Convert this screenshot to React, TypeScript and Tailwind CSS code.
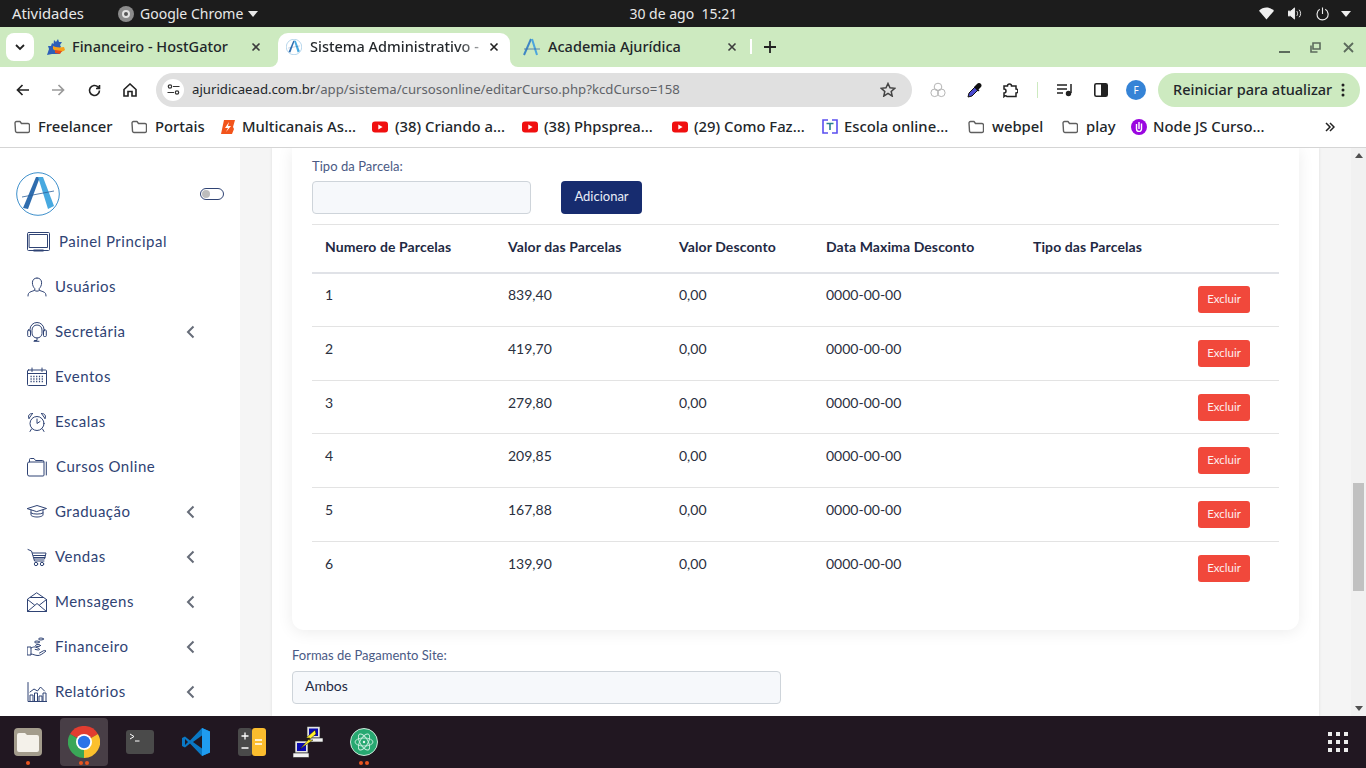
import React from "react";

const ui = { fontFamily: '"Noto Sans", "Open Sans", sans-serif' };
const pg = { fontFamily: 'Lato, "Open Sans", sans-serif' };

const S = ({ w = 20, h = 20, vb = "0 0 20 20", c = "#2f4374", sw = 1, children }: any) => (
  <svg width={w} height={h} viewBox={vb} fill="none" stroke={c} strokeWidth={sw} strokeLinecap="round" strokeLinejoin="round" className="shrink-0">
    {children}
  </svg>
);

const Folder = () => (
  <S w={16} h={14} vb="0 0 16 14" c="#5f5f5f" sw={1.4}>
    <path d="M1 3a1.500 1.500 0 0 1 1.500-1.500h3.500l1.500 2h6.500a1.500 1.500 0 0 1 1.500 1.500v6a1.500 1.500 0 0 1-1.500 1.500h-11a1.500 1.500 0 0 1-1.500-1.500z" />
  </S>
);
const Yt = () => (
  <svg width="16" height="12" viewBox="0 0 16 12" className="shrink-0">
    <rect width="16" height="11" y="0.500" rx="3" fill="#f00f0f" />
    <path d="M6.300 3.500v5l4.300-2.500z" fill="#fff" />
  </svg>
);
const ALogo = ({ s = 17, ring = true }: { s?: number; ring?: boolean }) => (
  <svg width={s} height={s} viewBox="0 0 44 44" fill="none" className="shrink-0">
    {ring && <circle cx="22" cy="22" r="21.300" stroke="#3d8fcb" strokeWidth="1" />}
    <path d="M7 36 L20 5 L24 5 L12 37 Z" fill="#2e6cae" />
    <path d="M22 5 L27 5 L38 34 L32 37 Z" fill="#47a9e0" />
    <path d="M6 25 L38 19" stroke="#2c5f99" strokeWidth="0.800" />
  </svg>
);

const Chev = () => (
  <svg width="9" height="14" viewBox="0 0 9 14" fill="none" stroke="#666c78" strokeWidth="2" className="shrink-0">
    <path d="M7.500 1.500 2 7l5.500 5.500" />
  </svg>
);

const icons: Record<string, React.ReactNode> = {
  monitor: (
    <S w={23} h={20} vb="0 0 23 20">
      <rect x="0.500" y="0.500" width="22" height="18" rx="1" />
      <rect x="2.500" y="2.500" width="18" height="13" />
      <path d="M7 18.500h9" strokeWidth="1.800" />
    </S>
  ),
  user: (
    <S>
      <path d="M10 1c-3 0-4.600 2-4.600 4.800 0 2.400 1.200 4.800 2.400 5.800v1.700c-2.400 1-5.500 1.500-6.300 3.200-.4.800-.5 2-.5 2.500M10 1c3 0 4.600 2 4.600 4.800 0 2.400-1.200 4.800-2.400 5.800v1.700c2.400 1 5.500 1.500 6.300 3.200.4.800.5 2 .5 2.500M7.800 13.500c.6 1 3.800 1 4.400 0" />
    </S>
  ),
  headset: (
    <S>
      <path d="M3 9V7.500a7 7 0 0 1 14 0V9" />
      <path d="M5 8c0-3 2.200-5 5-5s5 2 5 5v3.500c0 2.300-2.200 4.500-5 4.500s-5-2.200-5-4.500z" />
      <rect x="0.700" y="8" width="2.800" height="6.500" rx="0.800" />
      <rect x="16.500" y="8" width="2.800" height="6.500" rx="0.800" />
      <path d="M10 16v2.500h-2.500M7 19.300h5" />
    </S>
  ),
  calendar: (
    <S>
      <rect x="0.500" y="3" width="19" height="15.500" rx="1" />
      <path d="M0.500 6.500h19M5 1v3.500M15 1v3.500" />
      <path d="M3.500 9.500h13M3.500 12h13M3.500 14.500h13" strokeDasharray="1.200 1.600" strokeWidth="1.300" strokeLinecap="butt" />
    </S>
  ),
  clock: (
    <S>
      <circle cx="10" cy="11.500" r="7" />
      <path d="M10 7v4.500l3-2M2 6.500C.5 4.500 2 1 5.500 1.500M18 6.500c1.500-2 0-5.500-3.500-5M4.500 17l-1.500 2.500M15.500 17l1.500 2.500M2 6.500l3.500-5M18 6.500l-3.500-5" />
    </S>
  ),
  folder: (
    <S>
      <path d="M.5 6.500a1.500 1.500 0 0 1 1.500-1.500h.5V2.500a1 1 0 0 1 1-1H7l1.500 2h7a1.500 1.500 0 0 1 1.500 1.500V18a1 1 0 0 1-1 1H2a1.500 1.500 0 0 1-1.500-1.500zM2.500 5h14M19.300 5v13" />
    </S>
  ),
  cap: (
    <S>
      <path d="M.5 6.500 10 3.500l9.500 3-9.500 3zM4 8v5c0 1 3 2 6 2s6-1 6-2V8M4 11c2 1.500 10 1.500 12 0" />
    </S>
  ),
  cart: (
    <S>
      <path d="M1 2.500l3.500 1.500 3 10h9.500M5.500 6h13.500l-1.500 6H7.500M6.500 8.500h12M7 10.500h11" />
      <circle cx="9" cy="17" r="1.700" />
      <circle cx="15" cy="17" r="1.700" />
    </S>
  ),
  mail: (
    <S>
      <path d="M.5 7.500v12h19v-12L10 1zM.5 7.500 7.500 13M19.500 7.500 12.500 13M.5 19.500l9.500-8 9.500 8M3.500 5.500h13" />
    </S>
  ),
  hand: (
    <S>
      <path d="M.5 10h3.500v8h-3.500zM4 11c2-1 3.500-1.500 5-.8l3 1.300c1 .5.5 1.800-.8 1.500l-3-.6M4 17c2 0 4 1.500 7 1.500 2 0 4-1.200 8-4.500-1-.8-2-.6-3 0l-3.500 2" />
      <ellipse cx="14" cy="2" rx="2.500" ry="1" />
      <ellipse cx="10" cy="5" rx="2.500" ry="1" />
      <ellipse cx="11" cy="8.500" rx="2.500" ry="1" />
    </S>
  ),
  chart: (
    <S>
      <path d="M1 .5v19h19" />
      <path d="M3 19v-6h3v6M7.500 19v-8h3v8M12 19v-5h3v5M16 19v-8h3v8M3 10l4-3 3.500 2 3-4 4 4" />
    </S>
  ),
};

const menu = [
  { i: "monitor", t: "Painel Principal", tx: "ml-[9px]" },
  { i: "user", t: "Usuários", tx: "ml-[8px]" },
  { i: "headset", t: "Secretária", ch: 1, tx: "ml-[8px]" },
  { i: "calendar", t: "Eventos", tx: "ml-[8px]" },
  { i: "clock", t: "Escalas", tx: "ml-[8px]" },
  { i: "folder", t: "Cursos Online", tx: "ml-[9px]" },
  { i: "cap", t: "Graduação", ch: 1, tx: "ml-[8px]" },
  { i: "cart", t: "Vendas", ch: 1, tx: "ml-[8px]" },
  { i: "mail", t: "Mensagens", ch: 1, tx: "ml-[8px]" },
  { i: "hand", t: "Financeiro", ch: 1, tx: "ml-[8px]" },
  { i: "chart", t: "Relatórios", ch: 1, tx: "ml-[8px]" },
];

const rows = [
  ["1", "839,40"],
  ["2", "419,70"],
  ["3", "279,80"],
  ["4", "209,85"],
  ["5", "167,88"],
  ["6", "139,90"],
];

const gridCols = "grid grid-cols-[183px_171px_147px_207px_165px_94px]";

const Close = ({ c = "#3c3c3c" }: { c?: string }) => (
  <svg width="10" height="10" viewBox="0 0 10 10" stroke={c} strokeWidth="1.600" className="shrink-0">
    <path d="M1.500 1.500l7 7M8.500 1.500l-7 7" />
  </svg>
);

const Bm = ({ w, gap, icon, t }: { w: string; gap: string; icon: React.ReactNode; t: string }) => (
  <div className={`flex items-center ${gap} ${w}`}>
    <span className="flex w-[16px] justify-center">{icon}</span>
    <span className="whitespace-nowrap text-[14.800px] font-medium text-[#22262a]">{t}</span>
  </div>
);

export default function App() {
  return (
    <div className="flex h-screen w-[1366px] flex-col overflow-hidden bg-white" style={ui}>
      {/* GNOME top bar */}
      <div className="flex h-[27px] shrink-0 items-center bg-[#1c1c1c] text-[14px] text-[#e8e8e8]">
        <span className="ml-[12px] w-[106px] text-[14.800px]">Atividades</span>
        <span className="flex h-[16px] w-[16px] items-center justify-center rounded-full bg-[#8b8b8b]">
          <span className="h-[8px] w-[8px] rounded-full border-2 border-[#e3e3e3] bg-[#555]" />
        </span>
        <span className="ml-[6px]">Google Chrome</span>
        <svg width="10" height="6" viewBox="0 0 10 6" className="ml-[5px]"><path d="M0 0h10L5 6z" fill="#e8e8e8" /></svg>
        <span className="ml-[365px] w-[120px] text-center">30 de ago&nbsp;&nbsp;15:21</span>
        <div className="ml-auto mr-[15px] flex items-center">
          <svg width="15" height="13" viewBox="0 0 16 13"><path d="M0 3.500C4.500-1 11.500-1 16 3.500L8 13z" fill="#f0f0f0" /></svg>
          <svg width="14" height="13" viewBox="0 0 15 13" fill="none" stroke="#eee" className="ml-[14px]"><path d="M0 4h3l4-3.500v12L3 9H0z" fill="#eee" /><path d="M9.500 4c1 1.500 1 3.500 0 5M12 2.500c2 2 2 6 0 8" /></svg>
          <svg width="13" height="14" viewBox="0 0 14 14" fill="none" stroke="#eee" strokeWidth="1.200" className="ml-[14px]"><path d="M4 2C.5 4 .5 9 2.500 11.500s6.500 2.500 9 0S13.500 4 10 2M7 0v7" /></svg>
          <svg width="10" height="6" viewBox="0 0 10 6" className="ml-[12px]"><path d="M0 0h10L5 6z" fill="#eee" /></svg>
        </div>
      </div>

      {/* Tab strip */}
      <div className="flex h-[40px] shrink-0 items-end bg-[#cdeac0] text-[14.500px] font-medium text-[#22262a]">
        <div className="mb-[6px] ml-[6px] flex h-[28px] w-[28px] items-center justify-center rounded-[8px] bg-white">
          <svg width="10" height="7" viewBox="0 0 10 7" fill="none" stroke="#222" strokeWidth="1.800"><path d="M1 1l4 4 4-4" /></svg>
        </div>
        <div className="mb-[6px] ml-[13px] flex h-[28px] w-[231px] items-center">
          <svg width="18" height="18" viewBox="0 0 18 18" className="shrink-0">
            <path d="M0 17 2 11 1 8l3 0 1-3 1.500 1L7 2l2 2 2-3 1 3 3 0-2 3 1 2-2 2 3 2-3 3H5z" fill="#2d5fb8" />
            <path d="M6 8c2 1 6 2 11 1l1 3c-3 3-9 2-12-1z" fill="#f7a11a" />
            <path d="M8 12l7 1-2 3-5-1z" fill="#e74c1c" />
          </svg>
          <span className="ml-[7px] w-[179px] whitespace-nowrap">Financeiro - HostGator</span>
          <Close />
        </div>
        <div className="relative flex h-[34px] w-[232px] items-center rounded-t-[10px] bg-white pb-[6px] pl-[8px]">
          <span className="absolute bottom-0 left-[-8px] h-[8px] w-[8px] bg-white">
            <span className="block h-[8px] w-[8px] rounded-br-[8px] bg-[#cdeac0]" />
          </span>
          <span className="absolute bottom-0 right-[-8px] h-[8px] w-[8px] bg-white">
            <span className="block h-[8px] w-[8px] rounded-bl-[8px] bg-[#cdeac0]" />
          </span>
          <ALogo s={16} />
          <span className="ml-[8px] w-[179px] whitespace-nowrap bg-gradient-to-r from-[#22262a] from-[82%] to-[#e4e4e4] bg-clip-text text-transparent">Sistema Administrativo -</span>
          <Close c="#222" />
        </div>
        <div className="mb-[6px] ml-[13px] flex h-[28px] w-[227px] items-center">
          <svg width="18" height="18" viewBox="0 0 18 18" fill="none" className="shrink-0">
            <path d="M1 17 8 1" stroke="#3f86c4" strokeWidth="2" />
            <path d="M9 1l5 16" stroke="#4ca6dc" strokeWidth="2" />
            <path d="M1 11h16" stroke="#3f6ea8" strokeWidth="0.800" />
          </svg>
          <span className="ml-[7px] w-[179px] whitespace-nowrap">Academia Ajurídica</span>
          <Close />
        </div>
        <span className="mb-[13px] h-[15px] w-[2px] bg-white" />
        <svg width="12" height="12" viewBox="0 0 12 12" stroke="#222" strokeWidth="1.800" className="mb-[14px] ml-[12px]"><path d="M6 0v12M0 6h12" /></svg>
        <div className="mb-[14px] ml-auto mr-[12px] flex items-center">
          <svg width="11" height="12" viewBox="0 0 11 12"><path d="M0 10h11v2H0z" fill="#5c6b5c" /></svg>
          <svg width="11" height="11" viewBox="0 0 11 11" fill="none" stroke="#5c6b5c" strokeWidth="1.600" className="ml-[20px]"><path d="M3 1h7v6H3zM1 3.500V10h6.500" /></svg>
          <svg width="11" height="11" viewBox="0 0 11 11" stroke="#5c6b5c" strokeWidth="1.800" className="ml-[22px]"><path d="M1 1l9 9M10 1l-9 9" /></svg>
        </div>
      </div>

      {/* Toolbar */}
      <div className="flex h-[40px] shrink-0 items-start rounded-t-[8px] bg-white pt-[6px]">
        <div className="flex h-[34px] w-[156px] items-center pl-[16px]">
          <svg width="13" height="12" viewBox="0 0 13 12" fill="none" stroke="#222" strokeWidth="1.700"><path d="M13 6H1.500M6.500 1 1.500 6l5 5" /></svg>
          <svg width="13" height="12" viewBox="0 0 13 12" fill="none" stroke="#9a9a9a" strokeWidth="1.700" className="ml-[23px]"><path d="M0 6h11.500M6.500 1l5 5-5 5" /></svg>
          <svg width="13" height="13" viewBox="0 0 13 13" fill="none" stroke="#222" strokeWidth="1.600" className="ml-[23px]"><path d="M11.500 6.500a5 5 0 1 1-1.500-3.600L11.500 4.500M11.500 1v3.500H8" /></svg>
          <svg width="14" height="14" viewBox="0 0 14 14" fill="none" stroke="#222" strokeWidth="1.600" className="ml-[22px]"><path d="M1 6.500 7 1l6 5.500V13H9V8.500H5V13H1z" /></svg>
        </div>
        <div className="flex h-[34px] w-[756px] items-center rounded-full bg-[#e0e0e0] pb-[1px] pl-[6px] pr-[16px] text-[13.200px]">
          <span className="flex h-[22px] w-[22px] shrink-0 items-center justify-center rounded-full bg-white">
            <svg width="13" height="11" viewBox="0 0 13 11" fill="none" stroke="#333" strokeWidth="1.200"><circle cx="3" cy="2.500" r="1.700" /><path d="M6 2.500h6.500M.5 8.500H7" /><circle cx="10" cy="8.500" r="1.700" /></svg>
          </span>
          <span className="ml-[8px] whitespace-nowrap text-[#22262a]">ajuridicaead.com.br</span>
          <span className="whitespace-nowrap text-[#5f6368]">/app/sistema/cursosonline/editarCurso.php?kcdCurso=158</span>
          <svg width="16" height="15" viewBox="0 0 16 15" fill="none" stroke="#444" strokeWidth="1.500" className="ml-auto"><path d="M8 1.500l2 4.300 4.700.5-3.500 3.200 1 4.600L8 11.300l-4.200 2.800 1-4.600L1.300 6.300 6 5.800z" /></svg>
        </div>
        <div className="flex h-[34px] items-center">
          <svg width="16" height="16" viewBox="0 0 16 16" fill="none" stroke="#b5b5b5" className="ml-[18px]"><circle cx="8" cy="5" r="3.800" /><circle cx="4.700" cy="10.800" r="3.800" /><circle cx="11.300" cy="10.800" r="3.800" /></svg>
          <svg width="16" height="16" viewBox="0 0 16 16" className="ml-[21px]"><path d="M1 15l1-4 6-6 3 3-6 6z" fill="#4a4ad0" stroke="#111" /><path d="M8 4l2-2c1-1.500 3-1.500 4 0s.5 2.500-.5 3.500l-2 2 1 1-1.500 1L7 5z" fill="#111" /></svg>
          <svg width="16" height="16" viewBox="0 0 16 16" fill="none" stroke="#222" strokeWidth="1.500" className="ml-[19px]"><path d="M2 4h3.500a2 2 0 0 1 4 0H14v3a2 2 0 0 1 0 4v3.500H5a2 2 0 0 0-3 0V11a2 2 0 0 0 0-4z" /></svg>
          <span className="ml-[19px] h-[16px] w-[1px] bg-[#cdeac0]" />
          <svg width="16" height="14" viewBox="0 0 16 14" fill="none" stroke="#222" strokeWidth="1.500" className="ml-[19px]"><path d="M0 2h10M0 6h10M0 10h6M14 1v9" /><circle cx="11.500" cy="10.500" r="2" fill="#222" /></svg>
          <svg width="14" height="14" viewBox="0 0 14 14" className="ml-[21px]"><rect x="0.800" y="0.800" width="12.400" height="12.400" rx="1.500" fill="none" stroke="#222" strokeWidth="1.600" /><rect x="7" y="1" width="6" height="12" fill="#222" /></svg>
          <span className="ml-[18px] flex h-[20px] w-[20px] items-center justify-center rounded-full bg-[#3583d6] text-[10px] text-white">F</span>
          <div className="ml-[12px] flex h-[34px] w-[202px] items-center rounded-full bg-[#cdeac0] pl-[15px] text-[14.500px] font-medium text-[#22262a]">
            <span className="w-[168px] whitespace-nowrap">Reiniciar para atualizar</span>
            <svg width="4" height="14" viewBox="0 0 4 14" fill="#222"><circle cx="2" cy="2" r="1.500" /><circle cx="2" cy="7" r="1.500" /><circle cx="2" cy="12" r="1.500" /></svg>
          </div>
        </div>
      </div>

      {/* Bookmarks */}
      <div className="flex h-[41px] shrink-0 items-center border-b border-[#d5d5d5] bg-white pb-[1px] pl-[14px]">
        <Bm w="w-[117px]" gap="gap-[8px]" icon={<Folder />} t="Freelancer" />
        <Bm w="w-[89px]" gap="gap-[8px]" icon={<Folder />} t="Portais" />
        <Bm
          w="w-[152px]"
          gap="gap-[6px]"
          icon={
            <svg width="14" height="14" viewBox="0 0 14 14"><path d="M3 0h11l-2 7 1 2-2 5H0z" fill="#f2541b" /><path d="M8 2 4 8h3l-2 4 5-6H7z" fill="#fff" /></svg>
          }
          t="Multicanais As..."
        />
        <Bm w="w-[150px]" gap="gap-[7px]" icon={<Yt />} t="(38) Criando a..." />
        <Bm w="w-[150px]" gap="gap-[6px]" icon={<Yt />} t="(38) Phpsprea..." />
        <Bm w="w-[150px]" gap="gap-[6px]" icon={<Yt />} t="(29) Como Faz..." />
        <Bm
          w="w-[146px]"
          gap="gap-[6px]"
          icon={
            <svg width="16" height="15" viewBox="0 0 16 15" fill="none" stroke="#5b4ff0" strokeWidth="1.600"><path d="M6 1H1v13h5M10 1h5v13h-5" /><path d="M4.500 4.500h7M8 4.500V11" stroke="#2a7f8f" /></svg>
          }
          t="Escola online..."
        />
        <Bm w="w-[94px]" gap="gap-[8px]" icon={<Folder />} t="webpel" />
        <Bm w="w-[69px]" gap="gap-[8px]" icon={<Folder />} t="play" />
        <Bm
          w="w-[194px]"
          gap="gap-[6px]"
          icon={
            <span className="flex h-[16px] w-[16px] items-center justify-center rounded-full bg-[#9a06e0]">
              <svg width="8" height="11" viewBox="0 0 8 11" fill="none" stroke="#fff" strokeWidth="1.400"><path d="M1.500 3v5a2.500 2.500 0 0 0 5 0V2.500M4 1v7" /></svg>
            </span>
          }
          t="Node JS Curso..."
        />
        <svg width="10" height="10" viewBox="0 0 10 10" fill="none" stroke="#222" strokeWidth="1.500"><path d="M1 1l4 4-4 4M5 1l4 4-4 4" /></svg>
      </div>

      {/* Page */}
      <div className="flex min-h-0 flex-1 overflow-hidden bg-[#f5f5f5]" style={pg}>
        {/* Sidebar */}
        <aside className="w-[240px] shrink-0 bg-white pt-[24px]">
          <div className="flex h-[44px] items-center justify-between pl-[16px] pr-[16px]">
            <ALogo s={44} />
            <span className="flex h-[12px] w-[24px] items-center rounded-full border border-[#2f4374] pl-[1px]">
              <span className="h-[8px] w-[8px] rounded-full bg-[#bdbdbd]" />
            </span>
          </div>
          <nav className="mt-[3px] text-[15px] tracking-[0.500px] text-[#2f4374]">
            {menu.map((m) => (
              <div key={m.t} className="flex h-[45px] items-center pl-[27px] pr-[45px]">
                {icons[m.i]}
                <span className={m.tx}>{m.t}</span>
                {m.ch ? <span className="ml-auto flex"><Chev /></span> : null}
              </div>
            ))}
          </nav>
        </aside>

        {/* Content */}
        <main className="ml-[32px] flex w-[1047px] shrink-0 flex-col bg-white px-[20px] shadow-[0_0_3px_rgba(0,0,0,0.10)]">
          <section className="h-[482px] shrink-0 rounded-b-[12px] bg-white px-[20px] shadow-[0_2px_16px_rgba(0,0,0,0.08)]">
            <div className="pt-[10px] text-[13px] leading-[16px] tracking-[0.050px] text-[#4a5a85]">Tipo da Parcela:</div>
            <div className="mt-[7px] flex h-[33px]">
              <div className="w-[219px] rounded-[4px] border border-[#ced4da] bg-[#f6f8fb]" />
              <div className="ml-[30px] flex w-[81px] items-center justify-center rounded-[4px] bg-[#172c6f] pb-[2px] text-[13px] text-[#e9edf7]">Adicionar</div>
            </div>
            <div className={`${gridCols} mt-[10px] h-[50px] items-center border-t border-b-2 border-t-[#e3e3e3] border-b-[#e0e2e7] pb-[4px] text-[14px] font-bold tracking-[0.100px] text-[#1f2a44]`}>
              {["Numero de Parcelas", "Valor das Parcelas", "Valor Desconto", "Data Maxima Desconto", "Tipo das Parcelas", ""].map((h, i) => (
                <div key={i} className="pl-[13px]">{h}</div>
              ))}
            </div>
            <div className="mt-[-1px]">
              {rows.map((r, i) => (
                <div key={r[0]} className={`${gridCols} h-[53.750px] border-b ${i === 5 ? "border-transparent" : "border-[#e3e3e3]"} text-[14px] leading-[20px] text-[#2a3040]`}>
                  <div className="pl-[13px] pt-[12px]">{r[0]}</div>
                  <div className="pl-[13px] pt-[12px]">{r[1]}</div>
                  <div className="pl-[13px] pt-[12px]">0,00</div>
                  <div className="pl-[13px] pt-[12px]">0000-00-00</div>
                  <div />
                  <div className="pl-[13px] pt-[13px]">
                    <div className="flex h-[27px] w-[52px] items-center justify-center rounded-[3px] bg-[#f1483b] pb-[1px] text-[11.500px] text-[#fdeeee]">Excluir</div>
                  </div>
                </div>
              ))}
            </div>
          </section>
          <div className="mt-[17px] text-[13px] leading-[16px] text-[#4a5a85]">Formas de Pagamento Site:</div>
          <div className="mt-[8px] flex h-[33px] w-[489px] shrink-0 items-center rounded-[4px] border border-[#ced4da] bg-[#f6f8fb] pb-[4px] pl-[12px] text-[14px] text-[#1f2a44]">Ambos</div>
        </main>

        {/* Scrollbar */}
        <div className="ml-[32px] flex w-[15px] shrink-0 flex-col items-center bg-[#f1f1f1]">
          <svg width="8" height="5" viewBox="0 0 8 5" className="mt-[5px]"><path d="M0 5h8L4 0z" fill="#505050" /></svg>
          <div className="mt-[325px] h-[108px] w-[11px] bg-[#c1c1c1]" />
          <svg width="8" height="5" viewBox="0 0 8 5" className="mb-[5px] mt-auto"><path d="M0 0h8L4 5z" fill="#505050" /></svg>
        </div>
      </div>

      {/* Dock */}
      <div className="flex h-[52px] shrink-0 items-center bg-[#211721]">
        <DockCell dots={1}>
          <div className="flex h-[28px] w-[28px] items-center justify-center rounded-[4px] bg-[#a39c8c]">
            <svg width="22" height="19" viewBox="0 0 22 19"><path d="M2 0h6l2 2h10a2 2 0 0 1 2 2v13a2 2 0 0 1-2 2H2a2 2 0 0 1-2-2V2a2 2 0 0 1 2-2z" fill="#f4f1ea" /></svg>
          </div>
        </DockCell>
        <DockCell dots={2} active>
          <svg width="32" height="32" viewBox="0 0 32 32">
            <path d="M16 16 L2.100 8 A16 16 0 0 1 29.900 8 Z" fill="#e23d30" />
            <path d="M16 16 L29.900 8 A16 16 0 0 1 16 32 Z" fill="#fbc02d" />
            <path d="M16 16 L16 32 A16 16 0 0 1 2.100 8 Z" fill="#3aa757" />
            <circle cx="16" cy="16" r="8" fill="#fff" />
            <circle cx="16" cy="16" r="6.200" fill="#2a73e8" />
          </svg>
        </DockCell>
        <DockCell>
          <svg width="28" height="24" viewBox="0 0 28 24" fill="none" stroke="#fff" strokeWidth="1">
            <rect width="28" height="24" rx="3" fill="#4a4a4a" stroke="none" />
            <path d="M4 4l4 2.500L4 9M9 11h4.500" />
          </svg>
        </DockCell>
        <DockCell>
          <svg width="28" height="28" viewBox="0 0 28 28">
            <path d="M20 0 28 3.500V24.500L20 28 8 15.500 3 19.500 0 18V10l3-1.500 5 4z" fill="#0a78c4" />
            <path d="M20 0 28 3.500V24.500L20 28z" fill="#1f9cf0" />
            <path d="M20 7.500 11 14l9 6.500z" fill="#211721" />
            <path d="M3 11l3 3-3 3z" fill="#211721" />
          </svg>
        </DockCell>
        <DockCell>
          <svg width="28" height="28" viewBox="0 0 28 28" fill="none" stroke="#fff" strokeWidth="1.300">
            <rect width="14" height="28" rx="3" fill="#4a4a4a" stroke="none" />
            <rect x="14" width="14" height="28" rx="3" fill="#fbbd2e" stroke="none" />
            <path d="M3.500 8h7M7 4.500v7M3.500 20h7M17 12h7M17 16h7" />
          </svg>
        </DockCell>
        <DockCell>
          <svg width="30" height="32" viewBox="0 0 30 32">
            <rect x="14" y="0.500" width="13" height="11.500" fill="#e4e4e4" stroke="#222" strokeWidth="0.600" />
            <rect x="16" y="2.500" width="9" height="7.500" fill="#0a0ab0" />
            <rect x="17" y="12" width="13" height="4" fill="#f2f2f2" stroke="#222" strokeWidth="0.600" />
            <rect x="2" y="15" width="13" height="12" fill="#e4e4e4" stroke="#222" strokeWidth="0.600" />
            <rect x="4" y="17" width="9" height="8" fill="#0a0ab0" />
            <rect x="0" y="27" width="16" height="4.500" fill="#f2f2f2" stroke="#222" strokeWidth="0.600" />
            <path d="M22 4 13 12h4L7 23l13-9h-4l7-6z" fill="#ffef2a" stroke="#111" strokeWidth="0.500" />
          </svg>
        </DockCell>
        <DockCell dots={2}>
          <svg width="28" height="28" viewBox="0 0 28 28" fill="none">
            <circle cx="14" cy="14" r="13.500" fill="#27a871" stroke="#cfe8dc" />
            <g stroke="#cdeee0" strokeWidth="0.900">
              <ellipse cx="14" cy="14" rx="9" ry="4" />
              <ellipse cx="14" cy="14" rx="9" ry="4" transform="rotate(60 14 14)" />
              <ellipse cx="14" cy="14" rx="9" ry="4" transform="rotate(120 14 14)" />
            </g>
            <circle cx="14" cy="14" r="1.200" fill="#e6f7ef" />
          </svg>
        </DockCell>
        <div className="ml-auto mr-[18px] grid grid-cols-3 gap-[4px]">
          {Array.from({ length: 9 }).map((_, i) => (
            <span key={i} className="h-[4px] w-[4px] bg-[#ececec]" />
          ))}
        </div>
      </div>
    </div>
  );
}

function DockCell({ children, dots = 0, active = false }: { children: React.ReactNode; dots?: number; active?: boolean }) {
  return (
    <div className="relative flex h-[52px] w-[56px] items-center justify-center">
      {active && <div className="absolute inset-x-[4px] inset-y-[2px] rounded-[4px] bg-[#483e46]" />}
      <div className="relative flex">{children}</div>
      {dots > 0 && (
        <div className="absolute bottom-[3px] left-0 right-0 flex justify-center gap-[2px]">
          {Array.from({ length: dots }).map((_, i) => (
            <span key={i} className="h-[4px] w-[4px] rounded-full bg-[#e9541f]" />
          ))}
        </div>
      )}
    </div>
  );
}
